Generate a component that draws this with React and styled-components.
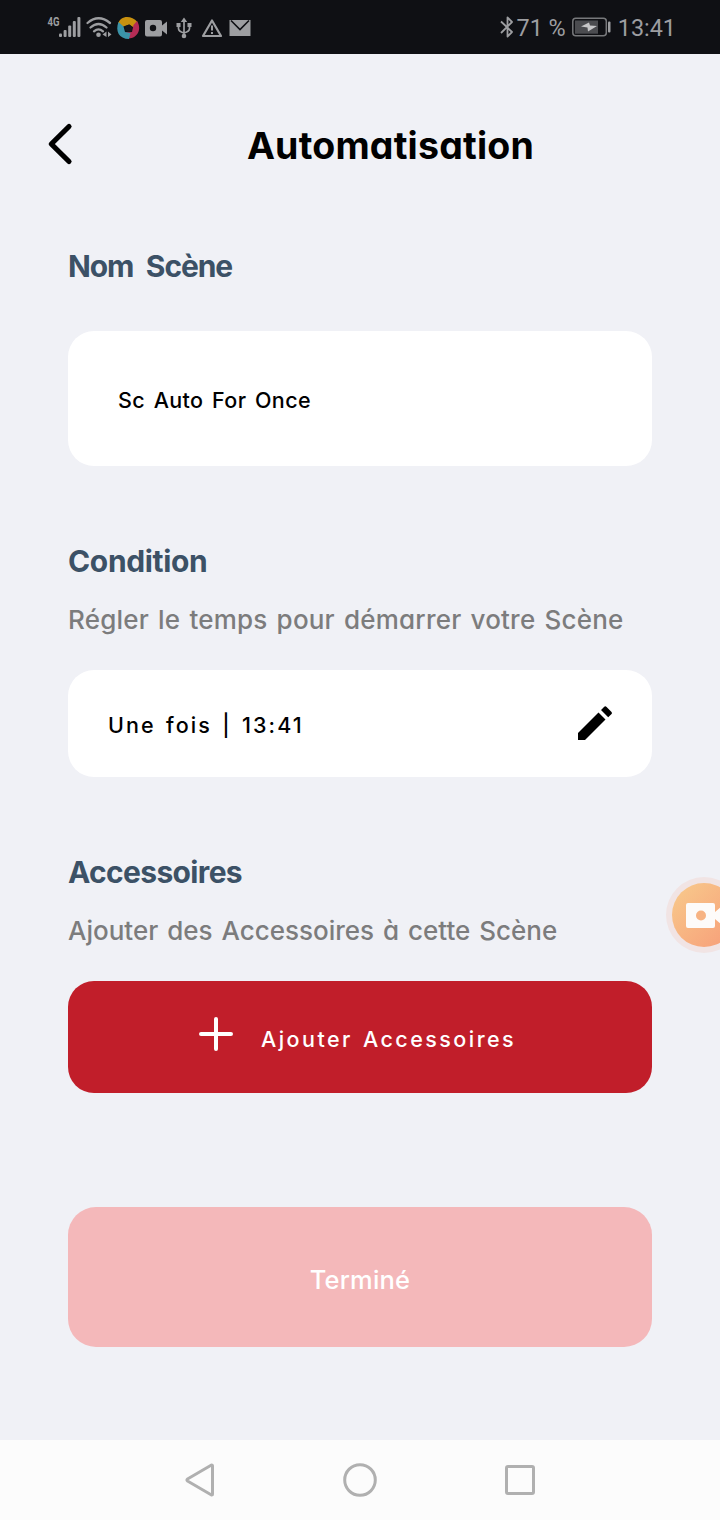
import React from "react";
import styled, { createGlobalStyle } from "styled-components";

const Global = createGlobalStyle`
  * { box-sizing: border-box; }
  body { margin: 0; background: #f0f1f6; font-family: Inter, "Liberation Sans", sans-serif; font-feature-settings: "cv11"; }
  button { border: 0; padding: 0; background: none; font: inherit; color: inherit; }
  svg { display: block; flex: none; }
`;
const Screen = styled.div`
  position: relative;
  width: 720px;
  height: 1520px;
  display: flex;
  flex-direction: column;
  background: #f0f1f6;
  overflow: hidden;
`;
const StatusBar = styled.header`
  height: 54px;
  flex: none;
  display: flex;
  justify-content: space-between;
  align-items: center;
  padding: 0 44px 0 46px;
  background: #0f1014;
  color: #9d9ea1;
  font: 400 23.4px/28px Roboto, sans-serif;
`;
const StatusGroup = styled.div`
  display: flex;
  align-items: center;
  height: 54px;
`;
const Clock = styled.span`
  margin-left: 7px;
  padding-top: 2px;
`;
const Percent = styled.span`
  margin: 0 6px 0 2px;
  padding-top: 2px;
  white-space: nowrap;
`;
const TitleBar = styled.div`
  height: 184px;
  flex: none;
  display: grid;
  grid-template-columns: 60px 1fr;
  align-items: center;
  padding: 0 0 4px 30px;
`;
const BackButton = styled.button`
  width: 60px;
  height: 60px;
  display: grid;
  place-items: center;
`;
const Title = styled.h1`
  margin: 3px 0 0;
  padding: 0 30px 0 1px;
  text-align: center;
  font-size: 37.5px;
  line-height: 50px;
  font-weight: 700;
  letter-spacing: ${(p) => p.$spacing}px;
`;
const Content = styled.main`
  flex: 1;
  display: flex;
  flex-direction: column;
  padding: 8px 68px 0;
`;
const Section = styled.section`
  display: flex;
  flex-direction: column;
  margin-bottom: ${(p) => p.$after}px;
`;
const Heading = styled.h2`
  margin: 0;
  color: #3c5166;
  font-size: 30px;
  line-height: 40px;
  font-weight: 700;
  letter-spacing: ${(p) => p.$spacing}px;
  word-spacing: 6.5px;
`;
const Hint = styled.p`
  margin: 19px 0 30px;
  color: #7c7c7d;
  font-size: 26px;
  line-height: 40px;
  font-weight: 500;
  white-space: nowrap;
  letter-spacing: ${(p) => p.$spacing}px;
  word-spacing: 2px;
`;
const Card = styled.div`
  height: ${(p) => p.$height}px;
  display: flex;
  align-items: center;
  justify-content: space-between;
  margin-top: ${(p) => p.$top || 0}px;
  padding: 0 ${(p) => p.$pad}px;
  border-radius: 26px;
  background: #fff;
`;
const Value = styled.span`
  font-size: 21.5px;
  line-height: 30px;
  font-weight: 500;
  padding-top: 3px;
  letter-spacing: ${(p) => p.$spacing}px;
  word-spacing: 2.4px;
`;
const AddButton = styled.button`
  height: 112px;
  display: flex;
  align-items: center;
  gap: 28px;
  padding-left: 131px;
  border-radius: 26px;
  background: #c11e2a;
  color: #fff;
  font-size: 21.5px;
  font-weight: 500;
  letter-spacing: ${(p) => p.$spacing}px;
  word-spacing: 2px;
`;
const Lift = styled.span`
  padding-bottom: 6px;
`;
const AddLabel = styled.span`
  padding-top: 3px;
  white-space: nowrap;
`;
const DoneButton = styled.button`
  height: 140px;
  border-radius: 28px;
  background: #f4b8ba;
  color: #fff;
  font-size: 25.5px;
  font-weight: 500;
  padding-top: 4px;
  letter-spacing: ${(p) => p.$spacing}px;
`;
const NavBar = styled.nav`
  height: 80px;
  flex: none;
  display: flex;
  justify-content: center;
  align-items: center;
  gap: 120px;
  background: #fcfcfc;
`;
const Recorder = styled.div`
  position: absolute;
  left: 666px;
  top: 877px;
  width: 76px;
  height: 76px;
`;

const LeftIcons = () => (
  <svg width="208" height="54" viewBox="46 0 208 54" fill="none" stroke="#9d9ea1" strokeWidth="2">
    <text x="47.5" y="26" fontFamily="Roboto" fontSize="12.5" fontWeight="700" fill="#9d9ea1" stroke="none" textLength="12" lengthAdjust="spacingAndGlyphs">4G</text>
    <g fill="#9d9ea1" stroke="none">
      <rect x="59" y="33.5" width="3" height="3.5" rx="1" />
      <rect x="63.6" y="30" width="3" height="7" rx="1" />
      <rect x="68.2" y="25.5" width="3" height="11.5" rx="1" />
      <rect x="72.8" y="21" width="3" height="16" rx="1" />
      <rect x="77.4" y="17" width="3" height="20" rx="1" />
    </g>
    <path d="M87.500 23Q98.500 13.500 110 23M90.500 27.500Q98.500 20.500 106.500 27.500M94 31.300Q98.500 27.500 103 31.300" strokeWidth="2.300" strokeLinecap="round" />
    <circle cx="98.500" cy="34.700" r="2.300" fill="#9d9ea1" stroke="none" />
    <path d="M106.500 31.500v5.500l-4-2.500zM108 31.500l3.500 3-3.500 2.500z" fill="#9d9ea1" stroke="none" />
    <g stroke="none">
      <path d="M118 24C120 15.500 131 14.500 137.500 22L136 29 129 24.500 122 27Z" fill="#c8910f" />
      <path d="M137 21C142 29 138 38 128.500 38.500L125.500 32.500 132 32 133.500 25Z" fill="#b52c55" />
      <path d="M118.500 22C115 31 119 39 129 39L130.500 33 125 32 123.500 26.500Z" fill="#3b93a8" />
      <path d="M125.500 26L129.500 24.500 132.500 27 131.500 31 128 32 125 29.500Z" fill="#17161b" />
    </g>
    <path d="M147 20h13a2 2 0 0 1 2 2v3.500l5-4v13l-5-4v4a2 2 0 0 1-2 2h-13a2 2 0 0 1-2-2v-12.500a2 2 0 0 1 2-2z" fill="#9d9ea1" stroke="none" />
    <circle cx="153" cy="28" r="3.200" fill="#0f1014" stroke="none" />
    <path d="M184 19v18M178.500 25v3.500q0 3 5.500 4.500 5.500-1.500 5.500-4.500V25" strokeWidth="1.700" />
    <path d="M180.800 22L184 17.500l3.200 4.500zM176.500 23h4v4h-4zM187.500 23h4v4h-4z" fill="#9d9ea1" stroke="none" />
    <circle cx="184" cy="36" r="2.300" fill="#9d9ea1" stroke="none" />
    <path d="M212 20.500L221 36H203Z" strokeWidth="2.200" strokeLinejoin="round" />
    <path d="M212 25.500v5M212 32v2" strokeWidth="2" />
    <path d="M229.500 20h21v16h-21z" fill="#9d9ea1" stroke="none" />
    <path d="M231 20.500l9 9 9-9" stroke="#0f1014" strokeWidth="1.600" />
  </svg>
);

export default function App() {
  return (
    <Screen>
      <Global />
      <StatusBar>
        <LeftIcons />
        <StatusGroup>
          <svg width="15" height="24" viewBox="0 0 15 24" fill="none" stroke="#9d9ea1" strokeWidth="1.800">
            <path d="M1 6.500l11 10.500L7.500 21.500V2.500l4.500 4.500L1 18" strokeLinejoin="round" />
          </svg>
          <Percent>71 %</Percent>
          <svg width="39" height="20" viewBox="0 0 39 20">
            <rect x=".8" y="1.300" width="33.500" height="17.500" rx="3" fill="none" stroke="#77787b" strokeWidth="1.500" />
            <rect x="3" y="3.500" width="23" height="13.200" fill="#4b4c50" />
            <path d="M9 9.500l8-4 1 3 7 .5-9 5.500-.5-4z" fill="#c6c6c8" />
            <rect x="36" y="4.500" width="2.500" height="11" rx="1" fill="#9d9ea1" />
          </svg>
          <Clock>13:41</Clock>
        </StatusGroup>
      </StatusBar>
      <TitleBar>
        <BackButton aria-label="Retour">
          <svg width="28" height="44" viewBox="0 0 28 44" fill="none" stroke="#000" strokeWidth="5.200" strokeLinecap="round" strokeLinejoin="round">
            <path d="M23 4.500L5.300 22l17.700 17.500" />
          </svg>
        </BackButton>
        <Title $spacing={0.2}>Automatisation</Title>
      </TitleBar>
      <Content>
        <Section $after={75}>
          <Heading $spacing={-1.1}>Nom Scène</Heading>
          <Card $height={135} $pad={50} $top={45}>
            <Value $spacing={0.4}>Sc Auto For Once</Value>
          </Card>
        </Section>
        <Section $after={75}>
          <Heading $spacing={-0.35}>Condition</Heading>
          <Hint $spacing={0.2}>Régler le temps pour démarrer votre Scène</Hint>
          <Card $height={107} $pad={40}>
            <Value $spacing={2.1}>Une fois | 13:41</Value>
            <svg width="34" height="36" viewBox="0 0 34 36">
              <path d="M0 27L20.500 6.500 27.500 13.500 7 34H0zM23 4L26 1Q27.300-.3 28.600 1L33.300 5.700Q34.600 7 33.300 8.300L30.200 11.300Z" />
            </svg>
          </Card>
        </Section>
        <Section $after={114}>
          <Heading $spacing={-0.65}>Accessoires</Heading>
          <Hint $spacing={0}>Ajouter des Accessoires à cette Scène</Hint>
          <AddButton $spacing={2.45}>
            <Lift>
              <svg width="34" height="34" viewBox="0 0 34 34" stroke="#fff" strokeWidth="4" strokeLinecap="round">
                <path d="M17 2v30M2 17h30" />
              </svg>
            </Lift>
            <AddLabel>Ajouter Accessoires</AddLabel>
          </AddButton>
        </Section>
        <DoneButton $spacing={0.2}>Terminé</DoneButton>
      </Content>
      <NavBar>
        <svg width="40" height="40" viewBox="0 0 40 40" fill="none" stroke="#b0b0b0" strokeWidth="3" strokeLinejoin="round">
          <path d="M7.500 19Q6.500 20 7.500 21L31.500 35Q32.500 35 32.500 34V6Q32.500 5 31.500 5Z" />
        </svg>
        <svg width="40" height="40" viewBox="0 0 40 40" fill="none" stroke="#b0b0b0" strokeWidth="3">
          <circle cx="20" cy="20" r="15.300" />
        </svg>
        <svg width="40" height="40" viewBox="0 0 40 40" fill="none" stroke="#b0b0b0" strokeWidth="3">
          <rect x="6.500" y="6.500" width="27" height="27" rx="1.500" />
        </svg>
      </NavBar>
      <Recorder>
        <svg width="76" height="76" viewBox="0 0 76 76">
          <defs>
            <linearGradient id="rec" x1="0" y1="0" x2="1" y2="1">
              <stop offset="0" stopColor="#f8cb8c" />
              <stop offset="1" stopColor="#f79c78" />
            </linearGradient>
          </defs>
          <circle cx="38" cy="38" r="38" fill="#f1e4e4" />
          <circle cx="38" cy="38" r="32" fill="url(#rec)" />
          <path d="M22 26h25a2 2 0 0 1 2 2v7l7-6v19l-7-6v7a2 2 0 0 1-2 2H22a2 2 0 0 1-2-2V28a2 2 0 0 1 2-2z" fill="#fdfbfa" />
          <circle cx="35" cy="38.500" r="5" fill="#f7b383" />
        </svg>
      </Recorder>
    </Screen>
  );
}
